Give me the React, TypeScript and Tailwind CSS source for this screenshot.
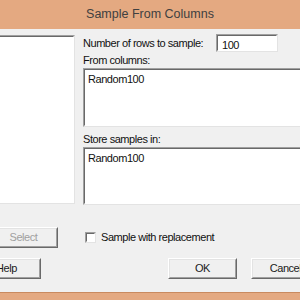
import React from 'react';

const font = { fontFamily: '"Liberation Sans", Arial, sans-serif' };

const Sunken = ({ className = '', children }: any) => (
  <div className={`border border-t-[#a0a0a0] border-l-[#a0a0a0] border-r-[#e3e3e3] border-b-[#e3e3e3] ${className}`}>
    <div className="h-full w-full border border-t-[#696969] border-l-[#696969] border-r-white border-b-white bg-white">
      {children}
    </div>
  </div>
);

const Btn = ({ label, disabled, className = '' }: any) => (
  <div className={`h-[21px] w-[69px] border border-t-white border-l-white border-r-[#696969] border-b-[#696969] ${className}`}>
    <div className="flex h-full w-full items-center justify-center border border-t-[#e3e3e3] border-l-[#e3e3e3] border-r-[#a0a0a0] border-b-[#a0a0a0] bg-[#f0f0f0]">
      <span className={`text-[11px] leading-none ${disabled ? 'text-[#a0a0a0]' : 'text-[#1a1a1a]'}`}>{label}</span>
    </div>
  </div>
);

export default function App() {
  return (
    <div className="flex h-[300px] w-[300px] flex-col overflow-hidden bg-[#f0f0f0]" style={font}>
      <div className="flex h-[29px] shrink-0 items-center justify-center bg-[#e4a981]">
        <span className="text-[12.5px] text-[#404040]">Sample From Columns</span>
      </div>

      <div className="ml-[-28px] flex w-[360px] flex-1 flex-col pt-[5px] text-[11px] tracking-[-0.45px] text-[#111]">
        <div className="flex">
          <Sunken className="ml-[17px] mt-[1px] h-[169px] w-[86px]" />
          <div className="ml-[8px] flex flex-1 flex-col">
            <div className="flex h-[18px] items-center">
              <span className="w-[133px]">Number of rows to sample:</span>
              <Sunken className="h-[18px] w-[62px]">
                <div className="px-[4px] pt-[1px]">100</div>
              </Sunken>
            </div>
            <div className="mt-[1px] h-[14px] leading-[14px]">From columns:</div>
            <Sunken className="mt-[1px] h-[59px] w-[240px]">
              <div className="px-[3px] pt-[1px]">Random100</div>
            </Sunken>
            <div className="mt-[5px] h-[14px] leading-[14px]">Store samples in:</div>
            <Sunken className="mt-[1px] h-[58px] w-[240px]">
              <div className="px-[3px] pt-[1px]">Random100</div>
            </Sunken>
          </div>
        </div>

        <div className="mt-[22px] flex items-center">
          <Btn label="Select" disabled className="ml-[17px]" />
          <div className="ml-[27px] flex items-center">
            <Sunken className="h-[11px] w-[11px]" />
            <span className="ml-[5px]">Sample with replacement</span>
          </div>
        </div>

        <div className="mt-[10px] flex items-center">
          <Btn label="Help" />
          <Btn label="OK" className="ml-[127px]" />
          <Btn label="Cancel" className="ml-[14px]" />
        </div>

        <div className="flex-1" />
      </div>

      <div className="h-[8px] shrink-0 border-t border-[#c98a5f] bg-[#e4a981]" />
    </div>
  );
}
